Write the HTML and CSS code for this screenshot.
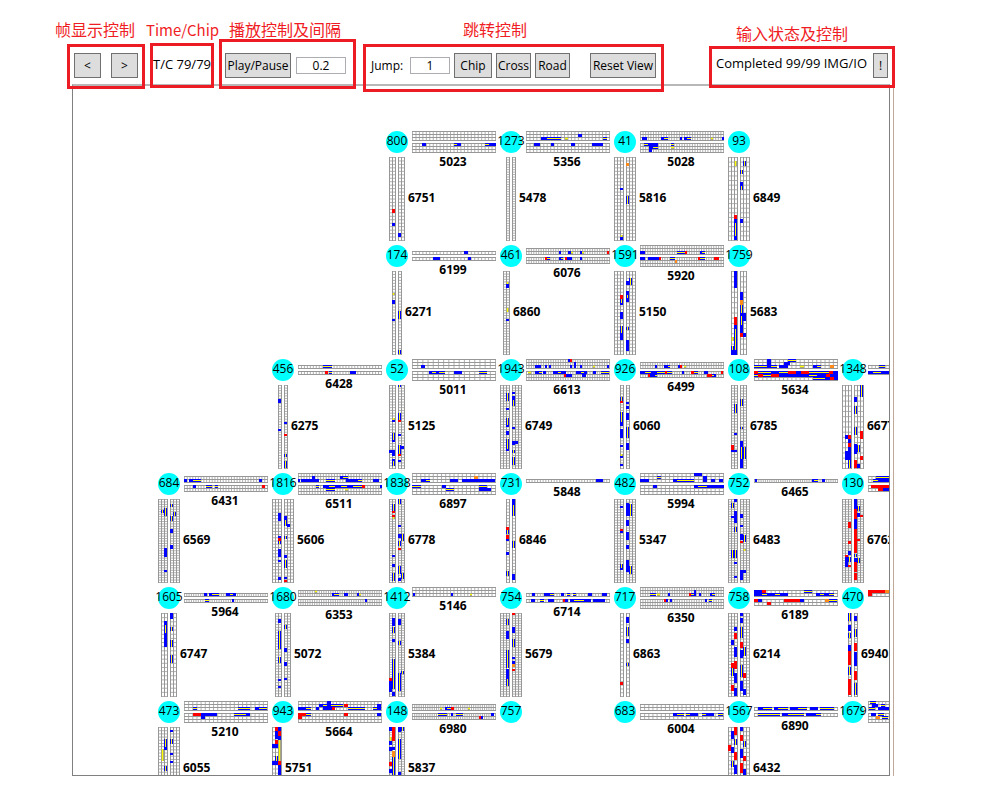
FILE: index.html
```html
<!DOCTYPE html>
<html lang="zh-CN">
<head>
<meta charset="utf-8">
<title>Traffic Viewer</title>
<link rel="stylesheet" href="styles.css">
</head>
<body>
<main class="app">
  <header class="toolbar">
    <section class="group group-frame">
      <h2 class="caption">帧显示控制</h2>
      <div class="box">
        <button class="btn btn-step" type="button">&lt;</button>
        <button class="btn btn-step" type="button">&gt;</button>
      </div>
    </section>
    <section class="group group-time">
      <h2 class="caption">Time/Chip</h2>
      <div class="box"><span class="status">T/C 79/79</span></div>
    </section>
    <section class="group group-play">
      <h2 class="caption">播放控制及间隔</h2>
      <div class="box">
        <button class="btn btn-wide" type="button">Play/Pause</button>
        <input class="field field-interval" type="text" value="0.2" aria-label="Interval">
      </div>
    </section>
    <section class="group group-jump">
      <h2 class="caption">跳转控制</h2>
      <div class="box">
        <label class="jump-label" for="jump">Jump:</label>
        <input class="field field-jump" id="jump" type="text" value="1">
        <button class="btn btn-chip" type="button">Chip</button>
        <button class="btn btn-jump" type="button">Cross</button>
        <button class="btn btn-jump" type="button">Road</button>
        <button class="btn btn-wide btn-reset" type="button">Reset View</button>
      </div>
    </section>
    <section class="group group-input">
      <h2 class="caption">输入状态及控制</h2>
      <div class="box">
        <span class="status">Completed 99/99 IMG/IO</span>
        <button class="btn btn-alert" type="button">!</button>
      </div>
    </section>
  </header>
  <div class="view">
    <svg class="map" id="map" role="img" aria-label="Road network"></svg>
  </div>
</main>
<script src="app.js"></script>
</body>
</html>
```
FILE: styles.css
```css
* { box-sizing: border-box; }

body {
  margin: 0;
  background: #fff;
  color: #000;
  font: 12px/16px "Open Sans", "Noto Sans CJK SC", sans-serif;
}

.app { padding: 0 105px 20px 67px; }

.toolbar {
  display: flex;
  align-items: flex-start;
  height: 84px;
  padding-top: 20px;
  position: relative;
  z-index: 1;
}

.group { flex: none; }

.caption {
  margin: 0;
  height: 20px;
  color: #f01c24;
  font: 16px/20px "Open Sans", "Noto Sans CJK SC", sans-serif;
  white-space: nowrap;
}

.box {
  display: flex;
  align-items: center;
  border: 3px solid #ed1c24;
  white-space: nowrap;
}

.group-frame { width: 78px; }
.group-frame .caption { margin: 0 -12px 4px; }
.group-frame .box { height: 45px; padding: 0 4px 2px; gap: 10px; }

.group-time { width: 64px; margin-left: 5px; }
.group-time .caption { margin: 0 -4px 3px; font-family: "Noto Sans CJK SC", sans-serif; font-size: 15px; }
.group-time .box { height: 45px; padding-bottom: 4px; justify-content: center; }

.group-play { width: 137px; margin-left: 5px; }
.group-play .caption { margin: 0 0 -1px 10px; }
.group-play .box { height: 50px; padding: 3px 3px 0; gap: 5px; }

.group-jump { width: 301px; margin-left: 7px; }
.group-jump .caption { margin: 0 0 4px 100px; }
.group-jump .box { height: 48px; padding: 0 5px 5px; gap: 4px; }

.group-input { width: 186px; margin-left: auto; }
.group-input .caption { margin: 4px 0 2px 27px; }
.group-input .box { height: 42px; padding: 0 4px 3px 4px; justify-content: space-between; }
.group-input .status { padding-bottom: 5px; }

.status { font-size: 13px; }

.btn {
  height: 25px;
  padding: 0;
  border: 1px solid #707070;
  background: #ddd;
  color: #000;
  font: inherit;
}
.btn-step { width: 27px; }
.btn-wide { width: 66px; }
.btn-chip { width: 38px; }
.btn-jump { width: 35px; }
.btn-alert { width: 15px; }
.btn-reset { margin-left: auto; }

.jump-label { width: 35px; }

.field {
  height: 17px;
  padding: 0;
  border: 1px solid #abadb3;
  background: #fff;
  color: #000;
  font: inherit;
  text-align: center;
}
.field-interval { width: 50px; }
.field-jump { width: 40px; }

.view {
  margin: 0 1px 0 5px;
  padding-right: 3px;
  border-right: 1px solid #c0a898;
}

.map {
  display: block;
  width: 100%;
  height: 692px;
  border: 1px solid #808080;
  border-top: 2px solid #b8b8b8;
  overflow: hidden;
}

.lines { fill: none; stroke: #979797; stroke-width: 1; }
.cells { fill: none; stroke: #b0b0b0; stroke-width: 1; }
.blue { fill: #00f; }
.red { fill: #f00; }
.yellow { fill: #ff0; }
.olive { fill: #a9a878; }
.orange { fill: #ff8a1c; }
.node { fill: #0ff; }
.node-text { font-size: 12px; text-anchor: middle; fill: #000; }
.road-text { font-size: 12px; font-weight: 700; }
.road-text-mid { text-anchor: middle; }
```
FILE: app.js
```js
const NS = 'http://www.w3.org/2000/svg';
const map = document.getElementById('map');
const STEP = 114, X0 = 96, Y0 = 56, LENGTH = 84, LANE = 3;

const crosses = [
  [2, 0, 800], [3, 0, 1273], [4, 0, 41], [5, 0, 93],
  [2, 1, 174], [3, 1, 461], [4, 1, 1591], [5, 1, 1759],
  [1, 2, 456], [2, 2, 52], [3, 2, 1943], [4, 2, 926], [5, 2, 108], [6, 2, 1348],
  [0, 3, 684], [1, 3, 1816], [2, 3, 1838], [3, 3, 731], [4, 3, 482], [5, 3, 752], [6, 3, 130],
  [0, 4, 1605], [1, 4, 1680], [2, 4, 1412], [3, 4, 754], [4, 4, 717], [5, 4, 758], [6, 4, 470],
  [0, 5, 473], [1, 5, 943], [2, 5, 148], [3, 5, 757], [4, 5, 683], [5, 5, 1567], [6, 5, 1679]
];

/* direction, column, row, id, lanes before, lanes after, cells, cars as lane.offset.length+kind */
const roads = [
  ['h', 2, 0, 5023, 3, 3, 24, '3.10.4b 3.42.3m 3.45.4b 3.73.4m 3.77.7b'],
  ['h', 3, 0, 5356, 3, 3, 24, '2.15.6b 2.21.14m 2.39.3y 1.52.4b 2.77.4m 3.8.6b 3.25.3b 3.45.4b 3.66.11b'],
  ['h', 4, 0, 5028, 3, 3, 32, '2.2.5b 2.21.3b 2.24.4m 2.40.2b 2.44.3b 2.47.4m 2.71.2y 2.82.2b 3.4.5m 3.8.10b 4.9.4b 4.13.5m 5.9.3b 3.31.3m 4.31.3y'],
  ['h', 2, 1, 6199, 1, 1, 24, '0.52.4b 1.21.7b 1.56.3b'],
  ['h', 3, 1, 6076, 2, 2, 34, '1.33.2b 1.42.3b 1.45.2y 1.54.2b 1.56.2y 1.81.2r 2.19.2r 2.21.3m 2.33.2b 2.35.2m 2.39.2r 2.41.5b 2.54.2b'],
  ['h', 4, 1, 5920, 3, 3, 34, '2.0.5b 2.37.8m 2.45.2r 2.60.2b 2.62.3m 3.0.5b 3.8.11b 3.19.2r 3.30.5m 4.35.2o 3.58.2r 3.60.5m 3.74.5r'],
  ['h', 1, 2, 6428, 1, 1, 28, '0.25.9m 1.27.3r 1.31.3m 1.52.6b'],
  ['h', 2, 2, 5011, 3, 3, 16, '2.9.4b 3.17.3b 3.20.4m 3.24.3b 3.27.6m 3.42.8b 3.67.8m'],
  ['h', 3, 2, 6613, 3, 3, 34, '2.9.6b 2.19.2b 2.23.2b 0.42.2b 0.44.2r 2.44.2b 1.48.2b 2.48.2b 2.54.2b 2.67.2y 2.81.2b 3.2.3y 3.9.4b 3.13.3m 3.17.3b 3.27.5b 3.32.3m 3.35.5b 4.38.2r 4.40.6b 3.50.5b 3.55.3m 3.58.3b 4.56.4b 3.67.3b 3.75.8m'],
  ['h', 4, 2, 6499, 2, 2, 34, '1.15.2b 1.24.4b 1.28.2m 1.38.2b 1.40.2r 1.44.2y 2.0.5b 2.5.6m 2.11.6b 2.17.8m 2.25.2r 2.27.5m 3.8.2r 3.10.5b 3.15.2m 2.42.2b 2.51.3r 2.54.4m 2.64.4b 3.67.5r 3.72.2m 3.74.2b 2.81.2r'],
  ['h', 5, 2, 5634, 3, 3, 20, '0.13.4b 1.13.4b 2.0.13m 2.13.4b 2.17.6m 1.30.6b 0.34.8m 2.25.9b 2.46.4y 2.59.4b 2.63.4m 2.76.4o 3.0.4r 3.4.13m 3.17.8b 3.25.9m 3.34.8r 3.42.5b 3.47.8r 3.55.20m 3.75.4r 3.79.5b 4.0.4m 4.4.5r 4.9.8m 4.17.8r 4.25.30b 4.55.8m 4.63.9b 4.72.4r 4.76.8b 5.59.12m 5.71.5b 5.76.4r 5.80.4b'],
  ['h', 6, 2, 0, 1, 1, 24, '0.11.6m 1.0.5b 1.5.8m 1.13.10b'],
  ['h', 0, 3, 6431, 2, 2, 30, '1.0.3b 1.5.4b 1.9.8m 1.75.3b 2.9.3b 2.22.6m 2.31.3m 2.78.3r'],
  ['h', 1, 3, 6511, 3, 3, 30, '2.0.2b 2.3.18b 1.14.3b 2.28.9m 1.42.3b 1.45.5m 2.48.12b 2.60.4m 2.75.6b 3.18.3m 3.25.6b 3.31.6m 3.37.6b 3.43.6m 3.49.6b 3.55.9m 3.64.3r 3.82.2b 4.28.9m 4.47.3y'],
  ['h', 2, 3, 6897, 3, 3, 20, '2.9.5b 2.14.4m 2.38.8b 2.50.33b 1.62.4o 3.0.9m 3.30.4b 3.67.8m 4.34.8m 4.67.12b'],
  ['h', 3, 3, 5848, 1, 0, 30, '0.70.7b'],
  ['h', 4, 3, 5994, 3, 3, 20, '0.54.8b 1.63.4b 2.63.4b 1.17.4m 2.0.9b 2.33.4b 2.37.17m 2.71.4b 2.79.4b 3.13.4b 3.54.4b 3.58.9m 3.67.17b'],
  ['h', 5, 3, 6465, 1, 0, 38, '0.1.2b 0.58.2b 0.60.4m 0.68.3b'],
  ['h', 6, 3, 0, 2, 2, 24, '0.8.14m 1.5.5m 1.10.12b 2.3.18r 3.10.5r 3.15.8b'],
  ['h', 0, 4, 5964, 1, 1, 36, '0.20.3b 0.25.3b 0.28.7m 0.42.4b 0.46.3m 0.49.3b 1.21.4m 1.48.2b'],
  ['h', 1, 4, 6353, 2, 2, 36, '0.17.2y 1.34.2b 1.36.5m 1.46.4b 1.59.2b 1.61.2y 2.67.2b'],
  ['h', 2, 4, 5146, 3, 0, 24, '2.1.2b 2.39.2b 2.58.2y'],
  ['h', 3, 4, 6714, 1, 1, 30, '0.6.3b 0.18.6b 0.24.4m 0.35.3b 0.41.3m 0.47.3m 0.62.4b 0.76.5b 1.5.4b 1.14.4m 1.22.6b 1.37.2r 1.39.3b 1.44.4b 1.48.10m 1.58.7b 1.67.12b'],
  ['h', 4, 4, 6350, 3, 3, 34, '2.10.6m 2.17.3y 2.28.2b 2.49.2r 2.51.3m 1.54.2b 2.54.2b 2.59.2b 2.70.2b 2.72.3m 3.24.2r 3.26.2b 3.30.2b 3.65.2b 3.69.3m'],
  ['h', 5, 4, 6189, 2, 2, 20, '0.0.8b 0.8.4r 1.0.8b 1.8.5m 1.13.8b 1.21.5m 1.26.8b 0.50.8m 1.62.4b 1.66.4m 1.70.5b 1.75.5m 2.0.4r 2.4.4b 2.30.16r 2.46.4b 2.71.4o 2.75.8m 3.13.4r'],
  ['h', 6, 4, 0, 2, 0, 20, '0.0.17r 0.17.5o 1.0.4r'],
  ['h', 0, 5, 5210, 3, 3, 20, '2.9.4m 2.54.12m 2.71.4b 2.75.8m 3.9.8r 3.17.16b 3.50.12m 3.62.4b 4.17.4b'],
  ['h', 1, 5, 5664, 3, 3, 24, '2.0.8b 2.8.5m 2.18.3b 1.21.4b 1.25.4m 0.29.4b 1.29.4b 1.33.12m 1.46.4r 2.25.9b 2.34.3r 2.50.17m 2.75.4m 1.79.4b 2.79.4b 3.0.8r 3.8.5m 4.0.4r 3.46.4r 3.79.4b'],
  ['h', 2, 5, 6980, 2, 2, 38, '1.28.2y 1.33.2b 1.35.4m 1.39.3r 1.56.2y 2.26.9m 2.39.2b 2.44.7m 2.79.3b 3.67.2r 3.69.2b'],
  ['h', 4, 5, 6004, 2, 2, 20, '2.33.4b 2.37.7m 2.46.4m 2.50.8b 2.62.4m 2.66.8b 2.78.5m'],
  ['h', 5, 5, 6890, 1, 1, 24, '0.4.5b 0.9.9m 0.20.4b 0.24.10m 0.36.8b 0.44.9m 0.56.8b 0.66.14m 1.4.22m 1.28.6b 1.34.16m 1.52.10b 1.62.5m'],
  ['h', 6, 5, 0, 3, 3, 24, '0.2.6m 1.4.6b 1.13.4m 2.1.6m 2.10.12b 3.3.5b 3.10.6m 4.8.4o 4.14.6m'],

  ['v', 2, 0, 6751, 2, 2, 24, '1.52.4r 1.66.3b 2.76.4b'],
  ['v', 3, 0, 5478, 1, 1, 34, ''],
  ['v', 4, 0, 5816, 3, 3, 24, '2.31.2b 2.78.2y 2.80.3b 3.6.3o 3.39.8m'],
  ['v', 5, 0, 6849, 3, 3, 18, '2.4.5y 2.58.4r 2.62.4b 2.66.13m 2.79.4b 3.13.4m 3.25.4b 3.29.4m 3.62.4b 4.4.5m'],
  ['v', 2, 1, 6271, 1, 1, 28, '0.22.2y 0.29.4b 0.48.2b 1.40.8m 1.79.4m'],
  ['v', 3, 1, 6860, 2, 0, 32, '1.11.2y 1.13.4b 1.37.4y 1.48.2b'],
  ['v', 4, 1, 5150, 3, 3, 24, '2.24.4r 2.28.4m 2.32.2b 2.41.7b 2.55.7m 2.62.7b 3.10.4b 4.7.7m 3.20.4b 3.24.3m 3.27.4b 3.56.3m 3.69.11b'],
  ['v', 5, 1, 5683, 2, 2, 16, '1.0.17b 1.46.8r 1.54.4b 1.58.21m 0.66.4y 0.75.4m 0.79.5b 1.79.5b 2.21.8b 2.29.5o 2.34.8m 2.42.3b 2.45.9m 2.54.8b 2.62.4r 3.42.8b 3.62.4b'],
  ['v', 1, 2, 6275, 1, 1, 32, '0.14.4b 0.44.2b 1.37.2b 1.49.2r 1.69.3m 1.76.7m'],
  ['v', 2, 2, 5125, 2, 2, 30, '1.33.2y 1.35.2b 0.65.3b 1.48.7m 1.55.2b 1.65.6b 1.74.2b 1.76.5m 2.0.2m 2.28.7m 2.35.2r 2.49.2b 2.60.9m 3.61.3b 2.69.2r 2.75.2b'],
  ['v', 3, 2, 6749, 3, 3, 32, '2.8.8m 2.23.2b 2.33.7m 2.40.2b 2.46.4b 2.54.10m 2.64.2b 3.7.2b 3.11.4b 3.15.6m 3.42.2b 3.56.4b 4.56.3b 3.65.3m 3.72.8m'],
  ['v', 4, 2, 6060, 1, 1, 30, '0.12.4m 0.16.2r 0.27.10m 0.37.4b 0.44.9b 0.60.2b 0.69.2y 0.71.2b 0.79.2b 1.17.2b 1.21.3b 1.28.7b 1.42.11m 1.58.7b'],
  ['v', 5, 2, 6785, 2, 2, 30, '1.19.9m 1.48.2b 0.60.5r 0.65.2b 1.65.2b 2.14.7m 2.42.2m 2.56.6b 2.62.12m 2.74.9b 3.62.12m'],
  ['v', 6, 2, 6677, 3, 3, 16, '1.50.4b 2.50.4r 2.54.4b 2.58.4r 2.62.13b 1.66.9b 2.75.8m 3.12.5b 3.21.8m 3.42.8m 3.59.10b 3.75.8r 4.60.7m 5.0.12m 5.46.8r 5.71.4r 4.79.4b'],
  ['v', 0, 3, 6569, 3, 3, 34, '2.9.8m 1.11.3m 2.49.9b 2.71.2b 3.5.3m 3.17.5m 3.30.4b 3.46.4b 4.13.4m'],
  ['v', 1, 3, 5606, 3, 3, 26, '2.14.8b 2.37.2b 2.39.3r 2.42.3m 2.50.8b 2.61.2b 2.78.3b 3.17.4b 3.21.6m 4.25.3b 3.37.3m 3.56.3b 3.61.8m 3.78.2b 3.81.2r'],
  ['v', 2, 3, 6778, 2, 2, 34, '1.5.7m 1.12.2r 1.16.2r 1.18.2y 1.56.2b 1.65.3b 1.74.8m 2.0.5m 2.26.2b 2.35.4b 3.35.7m 2.42.5m 2.49.2r 2.67.8m 3.74.6m 2.79.3b'],
  ['v', 3, 3, 6846, 1, 1, 26, '0.28.3r 0.31.4m 0.36.4r 0.40.2b 0.53.3b 0.72.5m 1.0.6b 1.6.11m 1.42.7m 1.75.6b'],
  ['v', 4, 3, 5347, 3, 3, 32, '2.7.2b 2.30.2r 2.32.2b 2.65.5m 2.69.2b 3.4.13b 4.5.12m 3.21.6b 3.33.8b 3.46.4b 3.61.12b 4.67.8m'],
  ['v', 5, 3, 6483, 3, 3, 34, '2.0.3b 1.4.5m 2.12.12b 1.17.2b 2.28.5m 1.51.8m 2.51.8m 2.63.2b 2.77.2b 3.15.4b 3.26.2b 3.35.6b 3.42.2r 4.36.7m 4.50.2y 3.71.10b 4.71.3b'],
  ['v', 6, 3, 6762, 3, 3, 34, '2.23.6r 2.42.3r 2.52.4b 1.56.2r 1.58.10b 2.58.5m 2.66.2r 3.0.10b 3.10.22r 4.7.5m 4.14.4b 5.16.2r 3.20.10b 3.32.22r 4.40.2r 3.55.3m 3.59.4b 4.59.5m 3.63.10r 3.74.7r'],
  ['v', 0, 4, 6747, 2, 2, 20, '1.8.4b 1.12.8m 1.20.14b 2.0.6b 2.14.4m 2.27.7m 2.42.8m'],
  ['v', 1, 4, 5072, 2, 2, 30, '1.6.4b 1.18.18m 1.44.6m 1.66.2b 1.73.2b 2.12.4m 2.35.4b 2.49.4b 2.65.2b'],
  ['v', 2, 4, 5384, 2, 2, 34, '1.5.8b 1.14.6m 1.26.3b 1.46.18m 1.64.12m 0.65.3r 0.68.11b 1.79.4b 2.6.6b 2.28.4m 2.60.18m 3.58.3m'],
  ['v', 3, 4, 5679, 3, 3, 34, '3.0.2r 2.6.6m 2.18.8b 2.37.18m 2.56.10b 2.66.7m 3.14.6b 3.26.8m 3.44.2b 3.48.3b 3.51.3o 3.56.2r'],
  ['v', 4, 4, 6863, 1, 1, 22, '1.4.6b 1.14.9m 1.26.4b 0.69.3r 1.50.3m'],
  ['v', 5, 4, 6214, 3, 3, 26, '3.0.3b 2.14.4b 2.20.6r 1.27.5b 2.34.10b 1.50.5r 1.55.8m 2.48.8r 2.60.10b 1.72.6r 2.75.8b 3.5.5b 3.14.11m 3.29.6r 3.37.8b 4.34.9m 3.52.12m 4.60.5r 3.68.10b 4.76.6b'],
  ['v', 6, 4, 6940, 1, 1, 30, '0.0.8m 0.12.6b 0.20.5m 0.32.6b 0.38.14r 0.54.8m 0.66.16r 1.3.5b 1.16.8m 1.30.8r 1.39.14b 1.58.9r 1.70.12m'],
  ['v', 0, 5, 6055, 3, 3, 26, '2.12.8m 2.20.3b 1.22.12y 2.39.5m 3.3.2b 3.12.5m 3.26.2b 3.34.2b'],
  ['v', 1, 5, 5751, 3, 0, 20, '1.0.4r 2.0.4b 1.4.8b 2.4.5r 2.9.4b 1.13.4r 0.17.4b 1.17.4b 2.13.21y 1.29.5m 0.34.4b 1.34.4b 2.34.4r 2.38.12b'],
  ['v', 2, 5, 5837, 2, 2, 34, '0.0.4b 1.0.14r 0.10.4y 0.14.4b 0.20.4b 1.20.3b 1.24.6o 0.35.4r 0.42.4b 1.30.18m 2.0.5b 2.12.20m 3.0.4m 2.45.3b'],
  ['v', 5, 5, 6432, 3, 3, 20, '2.0.8r 1.4.8b 2.12.6m 0.18.6r 1.20.6b 2.25.8r 1.34.6m 2.38.9b 3.0.4b 3.8.6r 4.14.6m 3.22.9b 4.29.5r 3.36.10r 4.42.8b']
];

const colors = { b: 'blue', r: 'red', o: 'orange' };

function add(parent, name, attrs, text) {
  const el = document.createElementNS(NS, name);
  for (const key in attrs) el.setAttribute(key, attrs[key]);
  if (text !== undefined) el.textContent = text;
  parent.appendChild(el);
  return el;
}

function drawRoad([dir, col, row, id, before, after, cells, cars]) {
  const horizontal = dir === 'h';
  const cx = X0 + col * STEP, cy = Y0 + row * STEP;
  const along = (horizontal ? cx : cy) + 15;
  const across = horizontal ? cy : cx;
  const group = add(map, 'g', {});

  const segment = (a, c, a2, c2) => horizontal ? `M${a} ${c}L${a2} ${c2}` : `M${c} ${a}L${c2} ${a2}`;
  const rect = (a, c, length, width, cls) => add(group, 'rect', horizontal
    ? { x: a, y: c, width: length, height: width, class: cls }
    : { x: c, y: a, width: width, height: length, class: cls });

  const starts = [across - 2 - LANE * before, across + 1];
  [before, after].forEach((lanes, side) => {
    if (!lanes) return;
    const start = starts[side] + 0.5;
    let cellPath = '', linePath = '';
    for (let i = 0; i <= cells; i++) {
      const a = along + i * (LENGTH - 1) / cells + 0.5;
      cellPath += segment(a, start, a, start + lanes * LANE);
    }
    for (let i = 0; i <= lanes; i++) {
      const c = start + i * LANE;
      linePath += segment(along, c, along + LENGTH, c);
    }
    add(group, 'path', { d: cellPath, class: 'cells' });
    add(group, 'path', { d: linePath, class: 'lines' });
  });

  cars.split(' ').filter(Boolean).forEach(car => {
    const [, lane, offset, length, kind] = car.match(/(\d+)\.(\d+)\.(\d+)(\w)/);
    const c = +lane < before ? starts[0] + lane * LANE : starts[1] + (lane - before) * LANE;
    const a = along + +offset;
    if (colors[kind]) {
      rect(a, c, +length, LANE, colors[kind]);
    } else {
      rect(a, c, +length, LANE, kind === 'm' ? 'blue' : 'olive');
      rect(a, c + 1, +length, 1, 'yellow');
    }
  });

  const edge = across + (after ? 2 + LANE * after : -1);
  if (!id) return;
  if (horizontal) {
    add(group, 'text', { x: cx + 56, y: edge + 13, class: 'road-text road-text-mid' }, id);
  } else {
    add(group, 'text', { x: edge + 3, y: cy + 60, class: 'road-text' }, id);
  }
}

roads.forEach(drawRoad);
crosses.forEach(([col, row, id]) => {
  const x = X0 + col * STEP, y = Y0 + row * STEP;
  add(map, 'circle', { cx: x, cy: y, r: 11, class: 'node' });
  add(map, 'text', { x: x, y: y + 3, class: 'node-text' }, id);
});
```
